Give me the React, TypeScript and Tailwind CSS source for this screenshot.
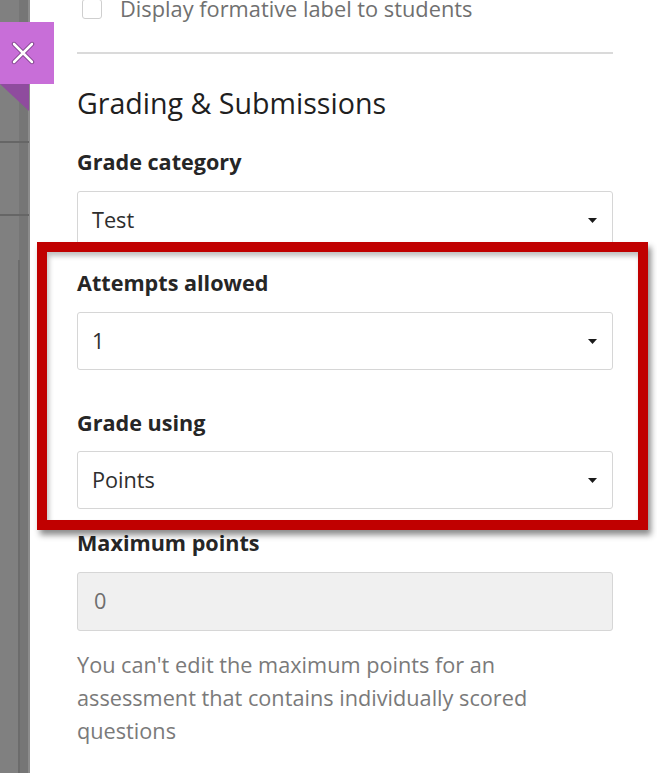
import React from 'react';

const Caret = () => (
  <svg width="9" height="5" viewBox="0 0 9 5" className="shrink-0">
    <path d="M0 0 L9 0 L4.5 5 Z" fill="#1a1a1a" />
  </svg>
);

const SelectBox = ({ value }: { value: string }) => (
  <div className="mt-[15px] h-[58px] flex items-center justify-between pl-[14px] pr-[15px] border border-[#d6d6d6] rounded-[3px] bg-white text-[21.7px] text-[#2e2e2e]">
    <span>{value}</span>
    <Caret />
  </div>
);

const Label = ({ children, className }: { children: React.ReactNode; className?: string }) => (
  <div className={`h-[28px] leading-[28px] text-[21.6px] font-bold text-[#262626] ${className ?? ''}`}>{children}</div>
);

const App: React.FC = () => {
  return (
    <div
      className="relative flex w-[657px] h-[773px] overflow-hidden bg-white"
      style={{ fontFamily: '"Open Sans", "Noto Sans", sans-serif' }}
    >
      {/* dimmed page behind the panel */}
      <div className="relative w-[30px] shrink-0 bg-[#808080] flex">
        <div className="w-[19px] h-full" />
        <div className="w-[9px] h-full bg-[#767676]" />
        <div className="w-[2px] h-full bg-[#8c8c8c]" />
        <div className="absolute left-0 top-[141px] w-[29px] h-[2px] bg-[#666]" />
        <div className="absolute left-0 top-[214px] w-[29px] h-[2px] bg-[#666]" />
        <div className="absolute left-[18px] top-[260px] bottom-0 w-[2px] bg-[#6c6c6c]" />
      </div>

      {/* settings panel */}
      <div className="flex-1 pl-[47px] pr-[44px]">
        <div className="mt-[-6px] h-[30px] flex items-center">
          <div className="ml-[5px] w-[20px] h-[20px] border border-[#cfcfcf] rounded-[3px] bg-white" />
          <span className="ml-[18px] text-[21.8px] text-[#707070]">Display formative label to students</span>
        </div>
        <div className="mt-[28px] h-[2px] bg-[#dadada]" />

        <h2 className="mt-[31px] h-[36px] leading-[36px] text-[28.6px] font-normal text-[#1f1f1f]">
          Grading &amp; Submissions
        </h2>

        <Label className="mt-[27px]">Grade category</Label>
        <SelectBox value="Test" />

        <Label className="mt-[20px]">Attempts allowed</Label>
        <SelectBox value="1" />

        <Label className="mt-[39px]">Grade using</Label>
        <div className="mt-[-1px]">
          <SelectBox value="Points" />
        </div>

        <Label className="mt-[20px]">Maximum points</Label>
        <div className="mt-[15px] h-[59px] flex items-center pl-[16px] border border-[#d6d6d6] rounded-[3px] bg-[#f0f0f0] text-[21.7px] text-[#6e6e6e]">
          0
        </div>
        <p className="mt-[17px] text-[21.7px] leading-[33px] text-[#7a7a7a]">
          You can't edit the maximum points for an assessment that contains individually scored questions
        </p>
      </div>

      {/* close button */}
      <div className="absolute left-0 top-[22px]">
        <button className="w-[54px] h-[62px] bg-[#c86ed8] flex items-center pl-[11px]">
          <svg width="24" height="24" viewBox="0 0 24 24">
            <path d="M3 3 L21 21 M21 3 L3 21" stroke="#7a3a86" strokeWidth="4.4" strokeLinecap="round" />
            <path d="M3 3 L21 21 M21 3 L3 21" stroke="#ffffff" strokeWidth="2.6" strokeLinecap="round" />
          </svg>
        </button>
        <svg width="29" height="27" viewBox="0 0 29 27" className="block">
          <path d="M0 0 L29 0 L29 27 Z" fill="#8f4c9e" />
        </svg>
      </div>

      {/* annotation highlight */}
      <div className="absolute left-[37px] top-[242px] w-[611px] h-[288px] border-[10px] border-[#c00000] shadow-[3px_5px_6px_rgba(0,0,0,0.45),inset_2px_4px_5px_rgba(0,0,0,0.25)] pointer-events-none" />
    </div>
  );
};

export default App;
